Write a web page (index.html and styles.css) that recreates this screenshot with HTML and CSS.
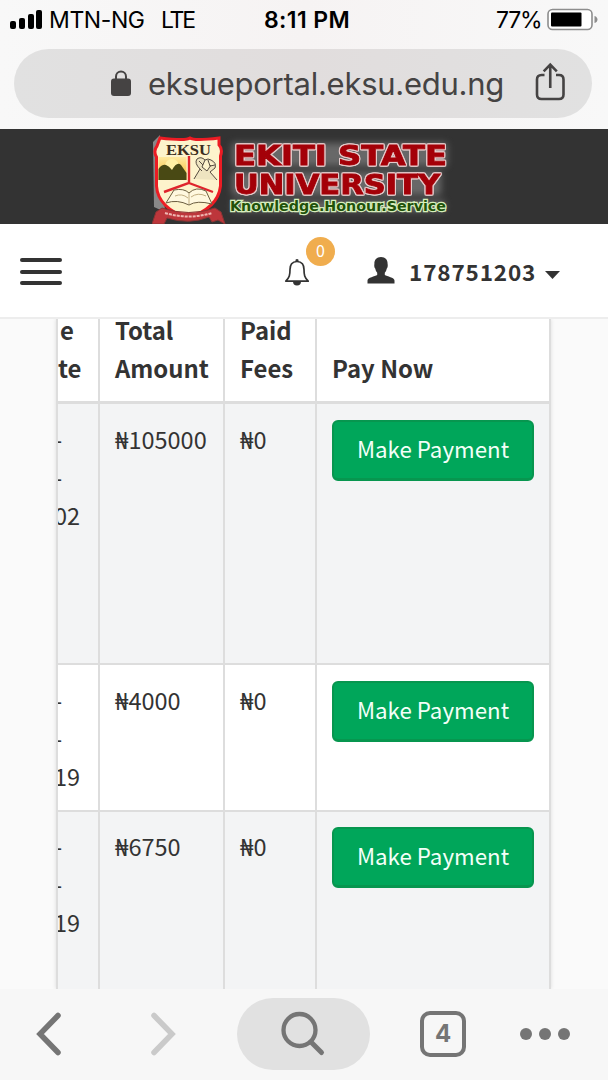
FILE: index.html
```html
<!DOCTYPE html>
<html lang="en">
<head>
<meta charset="utf-8">
<title>EKSU Portal</title>
<link rel="stylesheet" href="styles.css">
</head>
<body>
<div class="phone">
  <header class="browser-top">
    <div class="status">
      <div class="status-left">
        <svg class="signal" width="33" height="20" viewBox="0 0 33 20"><rect x="0" y="11" width="6" height="8" rx="2"/><rect x="9" y="8" width="6" height="11" rx="2"/><rect x="18" y="4" width="6" height="15" rx="2"/><rect x="26" y="0" width="6" height="19" rx="2"/></svg>
        <span class="carrier">MTN-NG</span><span class="network">LTE</span>
      </div>
      <div class="clock">8:11 PM</div>
      <div class="status-right">
        <span class="percent">77%</span>
        <svg width="52" height="23" viewBox="0 0 52 23"><rect x="1" y="1.5" width="44" height="20" rx="4.5" fill="#fff" stroke="#8d8d8d" stroke-width="1.6"/><rect x="4" y="4.5" width="30.500" height="14" rx="1" fill="#000"/><path d="M47.500 8c4 1 4 6 0 7z" fill="#8d8d8d"/></svg>
      </div>
    </div>
    <div class="address">
      <svg class="lock" width="20" height="27" viewBox="0 0 20 27"><rect x="0" y="8.500" width="20" height="17.500" rx="3" fill="#454343"/><path d="M5 10V6.500a5 5 0 0 1 10 0V10" fill="none" stroke="#454343" stroke-width="2"/></svg>
      <span class="url">eksueportal.eksu.edu.ng</span>
      <svg class="share" width="31" height="40" viewBox="0 0 31 40" fill="none" stroke="#454343" stroke-width="2.600"><path d="M9.500 13H6.500Q2 13 2 17.500V32.500Q2 37 6.500 37H24Q28.500 37 28.500 32.500V17.500Q28.500 13 24 13H21"/><path d="M15.250 26V3M8.700 9.300 15.250 2.700l6.550 6.600"/></svg>
    </div>
  </header>

  <div class="brand">
    <svg width="304" height="95" viewBox="0 0 304 95">
      <defs>
        <filter id="glow" x="-10%" y="-60%" width="120%" height="220%"><feGaussianBlur stdDeviation="3.5"/></filter>
        <linearGradient id="sun" x1="0" y1="0" x2="0" y2="1"><stop offset="0" stop-color="#ffe9a0"/><stop offset="1" stop-color="#f4b92d"/></linearGradient>
      </defs>
      <!-- crest -->
      <path d="M1 13 8 6 13 83 2 78z" fill="#888"/>
      <path d="M8 9Q34 12 38 9Q42 12 67 9V16Q71 20 68.500 27V57Q66 79 36 89Q6 79 4.500 57V28Q1 22 5 17z" fill="#fdf3cc" stroke="#ec1c24" stroke-width="3"/>
      <text class="crest-name" x="14" y="25.500" textLength="45" lengthAdjust="spacingAndGlyphs">EKSU</text>
      <rect x="6.500" y="28" width="28" height="23" fill="url(#sun)"/><circle cx="20" cy="37" r="7" fill="#fff0a5"/>
      <path d="M6.500 51V40Q10 35 14 36Q17 37 20 41Q25 32 29 36L34.500 44V51z" fill="#494914"/>
      <path d="M37 27V54L12 63M37 54 61 63" fill="none" stroke="#df242c" stroke-width="2.400"/>
      <g fill="#eee4c0" stroke="#554b40" stroke-width="1"><path d="M42 50 48 40Q42 34 45 30Q49 27 53 31Q56 29 59 31Q65 34 63 39L58 43 65 51M48 40 50 42M53 31 50 38 55 42 59 36M56 31 58 37 63 36M47 32 51 36"/></g>
      <path d="M14 74 22 61Q32 59 37 64Q44 57 54 62L60 75Q45 71 37 76Q25 70 14 74z" fill="#fff8df" stroke="#6b5d40" stroke-width="1"/>
      <path d="M37 64V75M23 67Q30 64 36 69M39 68Q46 63 54 67" stroke="#c2ae80" fill="none"/>
      <path d="M0 95 4 83 10 79Q37 88 63 79L69 83 73 95 66 91 60 93 57 88Q37 96 15 89L12 95z" fill="#bd363b" stroke="#8a3434"/>
      <path d="M13 84Q37 91 60 84" fill="none" stroke="#efb7b2" stroke-width="2" stroke-dasharray="3 1"/>
      <!-- wordmark -->
      <g fill="#8c8c8c" opacity=".6" filter="url(#glow)"><rect x="80" y="14" width="215" height="23"/><rect x="80" y="43" width="209" height="23"/><rect x="80" y="72" width="213" height="10"/></g>
      <g class="outline">
        <text class="word" x="82" y="35.500" textLength="213" lengthAdjust="spacingAndGlyphs">EKITI STATE</text>
        <text class="word" x="82" y="64.500" textLength="206" lengthAdjust="spacingAndGlyphs">UNIVERSITY</text>
      </g>
      <text class="motto" x="78" y="81.500" textLength="216" lengthAdjust="spacingAndGlyphs">Knowledge.Honour.Service</text>
    </svg>
  </div>

  <nav class="navbar">
    <div class="menu"><i></i><i></i><i></i></div>
    <div class="alerts">
      <svg width="26" height="29" viewBox="0 0 26 29"><path d="M13 2.500C8 2.500 6 6 6 10.500C6 16 5.500 18.500 1.800 22.200H24.200C20.500 18.500 20 16 20 10.500C20 6 18 2.500 13 2.500z" fill="none" stroke="#333" stroke-width="1.700" stroke-linejoin="round"/><path d="M11.500 2.500V.8q1.500-1.600 3 0v1.700zM9 22.500q0 4 4 4t4-4z" fill="#333"/></svg>
      <span class="badge">0</span>
    </div>
    <svg class="person" width="28" height="27" viewBox="0 0 28 27"><path d="M14 0C9.500 0 7.200 3 7.400 7C7 8 7.300 11 8.200 11.600Q8.700 14.500 10.200 15.700V18C8 19.500 0.500 20.500 0.500 23.500V26.500H27.500V23.500C27.500 20.500 20 19.500 17.800 18V15.700Q19.300 14.500 19.800 11.600C20.700 11 21 8 20.600 7C20.800 3 18.500 0 14 0z" fill="#333"/></svg>
    <span class="user">178751203</span>
    <span class="caret"></span>
  </nav>

  <main class="page">
    <div class="table">
      <div class="row head"><div class="cell cut"><p><span class="nudge">e</span><br>te</p></div><div class="cell">Total<br>Amount</div><div class="cell">Paid<br>Fees</div><div class="cell">Pay Now</div></div>
      <div class="row first"><div class="cell cut"><p>-<br>-<br>02</p></div><div class="cell">₦105000</div><div class="cell">₦0</div><div class="cell"><button class="pay">Make Payment</button></div></div>
      <div class="row second"><div class="cell cut"><p>-<br>-<br>19</p></div><div class="cell">₦4000</div><div class="cell">₦0</div><div class="cell"><button class="pay">Make Payment</button></div></div>
      <div class="row third"><div class="cell cut"><p>-<br>-<br>19</p></div><div class="cell">₦6750</div><div class="cell">₦0</div><div class="cell"><button class="pay">Make Payment</button></div></div>
    </div>
  </main>

  <footer class="toolbar">
    <svg class="back" width="26" height="46" viewBox="0 0 26 46"><path d="M22 4.500 4 23 22 41.500" fill="none" stroke="#757575" stroke-width="5.500" stroke-linecap="round"/></svg>
    <svg class="forward" width="26" height="46" viewBox="0 0 26 46"><path d="M4 4.500 22 23 4 41.500" fill="none" stroke="#cacaca" stroke-width="5.500" stroke-linecap="round"/></svg>
    <div class="search"><svg width="46" height="46" viewBox="0 0 46 46" fill="none" stroke="#757575" stroke-width="4.300" stroke-linecap="round"><circle cx="19.500" cy="19" r="16"/><path d="M31 31 41.500 41.500" stroke-width="5"/></svg></div>
    <div class="tabs">4</div>
    <div class="more"><i></i><i></i><i></i></div>
  </footer>
</div>
</body>
</html>
```

FILE: styles.css
```css
* { box-sizing: border-box; }
body { margin: 0; background: #fafafa; color: #333; font-family: "Noto Sans CJK SC", "Noto Sans", sans-serif; }
svg { display: block; flex: none; }
p { margin: 0; }
.phone { width: 608px; height: 1080px; display: flex; flex-direction: column; overflow: hidden; }

.browser-top { height: 129px; flex: none; background: linear-gradient(90deg, #f8f8f8, #f6f3f3 50%, #f8f8f8); font-family: Inter, "Liberation Sans", sans-serif; }
.status { height: 49px; display: grid; grid-template-columns: 240px 134px 1fr; color: #000; font-size: 23px; line-height: 40px; }
.status-left { display: flex; padding-left: 10px; white-space: nowrap; }
.signal { margin: 10px 6px 0 0; }
.carrier { width: 112px; letter-spacing: -.4px; }
.network { letter-spacing: -2.2px; }
.clock { text-align: center; font-weight: 600; letter-spacing: .4px; white-space: nowrap; }
.status-right { display: flex; padding-left: 122px; }
.status-right svg { margin-top: 8px; }
.percent { width: 51px; letter-spacing: -1.2px; }
.address { width: 578px; height: 69px; margin-left: 14px; border-radius: 35px; background: linear-gradient(90deg, #e1e1e1, #e1dddd 50%, #e1e1e1); display: flex; align-items: center; color: #454343; }
.lock { margin-left: 97px; }
.url { width: 387px; margin-left: 17px; font-size: 31px; letter-spacing: -.26px; white-space: nowrap; }
.share { margin-top: -3px; }

.brand { height: 95px; flex: none; background: #333; padding-left: 152px; }
.crest-name { font: bold 15px "Liberation Serif", serif; fill: #3b2d20; }
.word { font: bold 26px "DejaVu Sans", sans-serif; fill: #a40008; stroke: #a40008; stroke-width: .8px; }
.outline { filter: drop-shadow(1px 0 0 #e5caca) drop-shadow(-1px 0 0 #e5caca) drop-shadow(0 1px 0 #e5caca) drop-shadow(0 -1px 0 #e5caca); }
.motto { font: bold 13.500px "DejaVu Sans", sans-serif; fill: #21520a; stroke: #d9efbd; stroke-width: 2.4px; paint-order: stroke; }

.navbar { height: 95px; flex: none; background: #fff; border-bottom: 2px solid #ededed; display: flex; padding-left: 20px; }
.menu { width: 42px; height: 27px; margin-top: 34px; display: flex; flex-direction: column; justify-content: space-between; }
.menu i { height: 4px; border-radius: 2px; background: #333; }
.alerts { position: relative; margin: 35px 0 0 222px; }
.badge { position: absolute; left: 22px; top: -22px; width: 29px; height: 29px; border-radius: 50%; background: #f0ad4e; color: #fff; font-size: 16px; line-height: 27px; text-align: center; }
.person { margin: 33px 0 0 57px; }
.user { margin-left: 14px; width: 126px; font-size: 22.500px; font-weight: 700; letter-spacing: .85px; line-height: 95px; }
.caret { margin: 47px 0 0 10px; width: 15px; height: 8px; background: #333; clip-path: polygon(0 0, 100% 0, 50% 100%); }

.page { height: 670px; flex: none; overflow: hidden; padding-left: 56px; }
.table { width: 495px; height: 670px; border: solid #ddd; border-width: 0 2px; background: #fff; box-shadow: 0 0 4px rgba(0,0,0,.12); font-size: 23.500px; line-height: 38px; }
.row { display: grid; grid-template-columns: 42px 125px 92px 232px; border-bottom: 2px solid #ddd; }
.head { height: 85px; border-bottom-width: 3px; font-size: 23.900px; font-weight: 700; }
.first { height: 261px; background: #f3f4f5; }
.second { height: 147px; }
.third { height: 177px; background: #f3f4f5; border-bottom: 0; }
.third .cell { padding-top: 15px; }
.cell { padding: 16px 0 0 15px; border-right: 2px solid #ddd; min-width: 0; white-space: nowrap; }
.cell:last-child { border-right: 0; }
.head .cell { display: flex; align-items: flex-end; height: 82px; padding: 0 0 14px 15px; }
.cell.cut { overflow: hidden; padding-left: 0; }
.cut p { margin-left: -4px; }
.head .cut p { margin-left: 0; }
.nudge { padding-left: 2px; }
.pay { display: block; width: 202px; height: 61px; padding: 0 0 4px; border: 2px solid #07964f; border-bottom-width: 3px; border-radius: 6px; background: #00a65a; color: #f3fff8; font: 22.300px "Noto Sans CJK SC", sans-serif; }

.toolbar { height: 91px; flex: none; background: #f7f7f7; display: flex; }
.back { margin: 22px 0 0 36px; }
.forward { margin: 22px 0 0 88px; }
.search { width: 133px; height: 72px; margin: 9px 0 0 61px; border-radius: 36px; background: #e1e1e1; padding: 13px 0 0 43px; }
.tabs { width: 46px; height: 46px; margin: 22px 0 0 50px; border: 4px solid #757575; border-radius: 10px; font: 700 24px/38px Inter, sans-serif; color: #757575; text-align: center; }
.more { display: flex; gap: 7px; margin: 39px 0 0 54px; }
.more i { width: 12px; height: 12px; border-radius: 50%; background: #757575; }
```
